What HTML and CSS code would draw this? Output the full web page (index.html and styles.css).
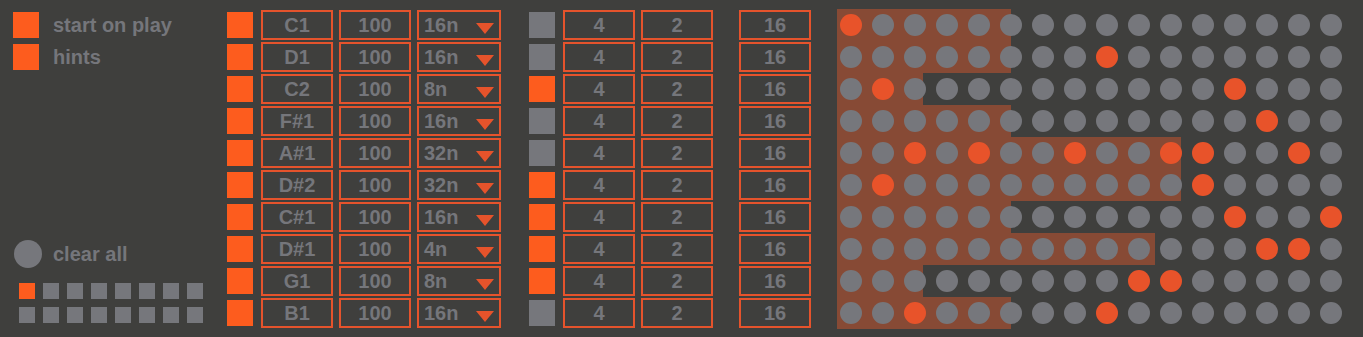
FILE: index.html
```html
<!DOCTYPE html>
<html lang="en">

<head>
    <meta charset="UTF-8">
    <meta name="viewport" content="width=device-width, initial-scale=1.0">
    <title>Step Sequencer</title>
    <link rel="stylesheet" href="styles.css">
</head>

<body>
    <div class="app">
        <aside class="side">
            <div class="opt"><span class="toggle on"></span><span class="label">start on play</span></div>
            <div class="opt"><span class="toggle on"></span><span class="label">hints</span></div>
            <div class="clear"><span class="clear-dot"></span><span class="label">clear all</span></div>
            <div class="pages">
                <span class="page on"></span><span class="page"></span><span class="page"></span><span class="page"></span>
                <span class="page"></span><span class="page"></span><span class="page"></span><span class="page"></span>
                <span class="page"></span><span class="page"></span><span class="page"></span><span class="page"></span>
                <span class="page"></span><span class="page"></span><span class="page"></span><span class="page"></span>
            </div>
        </aside>

        <div class="rows" id="rows"></div>
    </div>

    <script>
        // note, duration, second toggle, active steps, length bar width
        const tracks = [
            ['C1', '16n', false, [0], 174],
            ['D1', '16n', false, [8], 174],
            ['C2', '8n', true, [1, 12], 86],
            ['F#1', '16n', false, [13], 174],
            ['A#1', '32n', false, [2, 4, 7, 10, 11, 14], 344],
            ['D#2', '32n', true, [1, 11], 344],
            ['C#1', '16n', true, [12, 15], 174],
            ['D#1', '4n', true, [13, 14], 318],
            ['G1', '8n', true, [9, 10], 86],
            ['B1', '16n', false, [2, 8], 174]
        ];

        const arrow = '<svg class="arrow" width="18" height="11" viewBox="0 0 18 11"><polygon points="0,0 18,0 9,11" /></svg>';

        const rows = document.getElementById('rows');

        tracks.forEach(function (t) {
            let steps = '';
            for (let i = 0; i < 16; i++) {
                steps += '<span class="step' + (t[3].includes(i) ? ' on' : '') + '"></span>';
            }

            const row = document.createElement('div');
            row.className = 'row';
            row.innerHTML =
                '<span class="toggle on"></span>' +
                '<div class="box note">' + t[0] + '</div>' +
                '<div class="box vel">100</div>' +
                '<div class="box dur"><span>' + t[1] + '</span>' + arrow + '</div>' +
                '<span class="toggle mute' + (t[2] ? ' on' : '') + '"></span>' +
                '<div class="box div">4</div>' +
                '<div class="box oct">2</div>' +
                '<div class="box len-box">16</div>' +
                '<div class="steps"><span class="len" style="width:' + t[4] + 'px"></span>' + steps + '</div>';
            rows.appendChild(row);
        });
    </script>
</body>

</html>
```

FILE: styles.css
```css
* {
    margin: 0;
    padding: 0;
    box-sizing: border-box;
    font-family: 'Liberation Sans', Arial, sans-serif;
}

body {
    background: #3f3f3d;
    color: #75767b;
    font-weight: bold;
    font-size: 20px;
    overflow: hidden;
}

.app {
    display: flex;
}

/* left options panel */
.side {
    width: 220px;
    padding: 12px 0 0 13px;
    display: flex;
    flex-direction: column;
}

.opt {
    display: flex;
    align-items: center;
    gap: 14px;
    height: 26px;
}

.opt + .opt {
    margin-top: 6px;
}

.label {
    line-height: 26px;
}

.toggle {
    width: 26px;
    height: 26px;
    background: #76777c;
    flex-shrink: 0;
}

.toggle.on {
    background: #fd5c1e;
}

.clear {
    display: flex;
    align-items: center;
    gap: 11px;
    margin-top: 170px;
    padding-left: 1px;
}

.clear-dot {
    width: 28px;
    height: 28px;
    border-radius: 50%;
    background: #76777c;
}

.pages {
    display: grid;
    grid-template-columns: repeat(8, 16px);
    gap: 8px;
    margin: 15px 0 0 6px;
}

.page {
    width: 16px;
    height: 16px;
    background: #76777c;
}

.page.on {
    background: #fd5c1e;
}

/* track rows */
.rows {
    padding: 9px 0 0 7px;
}

.row {
    display: flex;
    align-items: center;
    height: 32px;
}

.box {
    height: 30px;
    border: 2px solid #e5532c;
    line-height: 26px;
    text-align: center;
    width: 72px;
    margin-left: 6px;
}

.box.note {
    margin-left: 8px;
}

.box.dur {
    width: 84px;
    display: flex;
    justify-content: space-between;
    align-items: center;
    padding: 0 5px;
    text-align: left;
}

.arrow {
    margin-top: 7px;
}

.arrow polygon {
    fill: #e6532b;
}

.toggle.mute {
    margin-left: 28px;
}

.box.div {
    margin-left: 8px;
}

.box.len-box {
    margin-left: 26px;
}

/* step grid */
.steps {
    position: relative;
    display: flex;
    align-items: center;
    gap: 10px;
    height: 32px;
    padding-left: 3px;
    margin-left: 26px;
}

.len {
    position: absolute;
    left: 0;
    top: 0;
    bottom: 0;
    background: #874a35;
}

.step {
    position: relative;
    width: 22px;
    height: 22px;
    border-radius: 50%;
    background: #76777c;
}

.step.on {
    background: #e8532a;
}
```
